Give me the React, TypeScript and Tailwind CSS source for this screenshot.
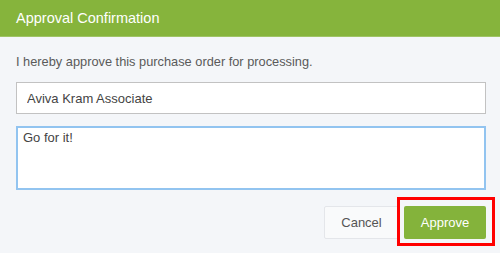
import React from 'react';

const App: React.FC = () => {
  return (
    <div className="h-[253px] w-[500px] overflow-hidden bg-[#f4f6f9] font-['Liberation_Sans',Arial,sans-serif]">
      {/* header */}
      <header className="flex h-[37px] items-center border-b border-[#9fc466] bg-[#86b43c] px-4">
        <h1 className="text-[14.5px] leading-[17px] text-white">Approval Confirmation</h1>
      </header>

      {/* body */}
      <main className="pl-4 pr-[14px] pt-[17px]">
        <p className="text-[12.8px] leading-[16px] text-[#5a5a5a]">
          I hereby approve this purchase order for processing.
        </p>

        <input
          readOnly
          defaultValue="Aviva Kram Associate"
          className="mt-[12px] block h-[32px] w-full border border-[#c2c2c2] bg-white px-[10px] text-[13px] text-[#444] outline-none"
        />

        <textarea
          readOnly
          defaultValue="Go for it!"
          className="mt-[12px] block h-[64px] w-full resize-none border-2 border-[#92c4f0] bg-white px-[5px] pt-[2px] text-[13px] leading-[16px] text-[#444] outline-none"
        />

        <div className="mt-[16px] flex justify-end gap-[5px]">
          <button className="h-[33px] w-[75px] rounded-[2px] border border-[#e4e6ea] bg-[#f9fafb] text-[13px] text-[#555]">
            Cancel
          </button>
          <div className="relative">
            <button className="h-[33px] w-[82px] rounded-[2px] bg-[#84b33b] text-[13px] text-white">
              Approve
            </button>
            {/* highlight annotation */}
            <div className="pointer-events-none absolute -top-[9px] -bottom-[7px] -left-[7px] -right-[9px] border-[3px] border-[#ff0000]" />
          </div>
        </div>
      </main>
    </div>
  );
};

export default App;
